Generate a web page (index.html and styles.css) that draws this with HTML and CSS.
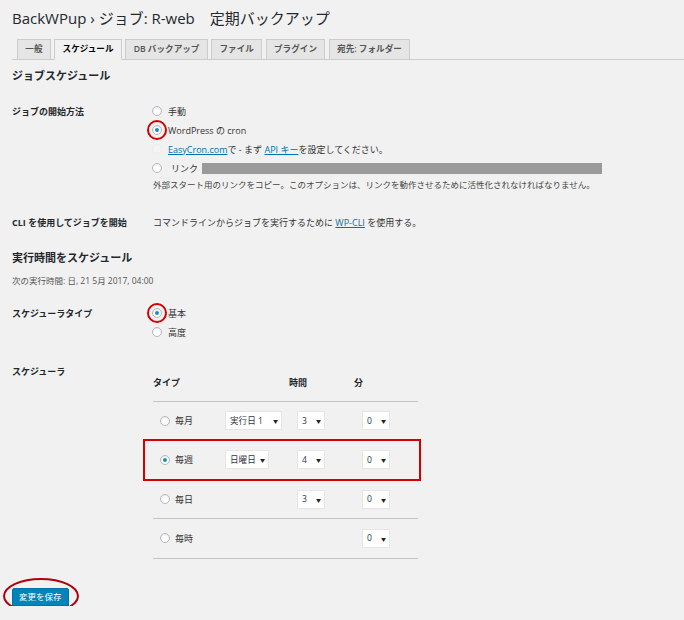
FILE: index.html
```html
<!DOCTYPE html>
<html lang="ja">
<head>
<meta charset="utf-8">
<title>BackWPup</title>
<link rel="stylesheet" href="styles.css">
</head>
<body>
<div class="wrap">
  <h1 class="page-title">BackWPup › ジョブ: R-web　定期バックアップ</h1>
  <nav class="tabs">
    <span class="tab">一般</span>
    <span class="tab active">スケジュール</span>
    <span class="tab">DB バックアップ</span>
    <span class="tab">ファイル</span>
    <span class="tab">プラグイン</span>
    <span class="tab">宛先: フォルダー</span>
  </nav>

  <h2 class="section-title s1">ジョブスケジュール</h2>

  <div class="form-row r-start">
    <div class="label">ジョブの開始方法</div>
    <div class="field">
      <div class="opt"><span class="radio"></span><span>手動</span></div>
      <div class="opt"><span class="radio checked circled"></span><span>WordPress の cron</span></div>
      <div class="opt"><span class="radio faint"></span><span><a class="link" href="#">EasyCron.com</a>で - まず <a class="link" href="#">API キー</a>を設定してください。</span></div>
      <div class="opt"><span class="radio"></span><span class="link-label">リンク</span><span class="redacted"></span></div>
      <p class="desc">外部スタート用のリンクをコピー。このオプションは、リンクを動作させるために活性化されなければなりません。</p>
    </div>
  </div>

  <div class="form-row r-cli">
    <div class="label">CLI を使用してジョブを開始</div>
    <div class="field line">コマンドラインからジョブを実行するために <a class="link" href="#">WP-CLI</a> を使用する。</div>
  </div>

  <h2 class="section-title s2">実行時間をスケジュール</h2>
  <p class="next-run">次の実行時間: 日, 21 5月 2017, 04:00</p>

  <div class="form-row r-type">
    <div class="label">スケジューラタイプ</div>
    <div class="field">
      <div class="opt"><span class="radio checked circled"></span><span>基本</span></div>
      <div class="opt"><span class="radio"></span><span>高度</span></div>
    </div>
  </div>

  <div class="form-row r-sched">
    <div class="label">スケジューラ</div>
    <div class="field">
      <div class="sched">
        <div class="sched-row head">
          <div class="c1">タイプ</div>
          <div class="c2"></div>
          <div class="c3">時間</div>
          <div class="c4">分</div>
        </div>
        <div class="sched-row">
          <div class="c1 type"><span class="radio"></span><span>毎月</span></div>
          <div class="c2"><span class="select w-day">実行日 1<i>▼</i></span></div>
          <div class="c3"><span class="select w-num">3<i>▼</i></span></div>
          <div class="c4"><span class="select w-num">0<i>▼</i></span></div>
        </div>
        <div class="sched-row">
          <div class="c1 type"><span class="radio checked"></span><span>毎週</span></div>
          <div class="c2"><span class="select w-wday">日曜日<i>▼</i></span></div>
          <div class="c3"><span class="select w-num">4<i>▼</i></span></div>
          <div class="c4"><span class="select w-num">0<i>▼</i></span></div>
        </div>
        <div class="sched-row">
          <div class="c1 type"><span class="radio"></span><span>毎日</span></div>
          <div class="c2"></div>
          <div class="c3"><span class="select w-num">3<i>▼</i></span></div>
          <div class="c4"><span class="select w-num">0<i>▼</i></span></div>
        </div>
        <div class="sched-row">
          <div class="c1 type"><span class="radio"></span><span>毎時</span></div>
          <div class="c2"></div>
          <div class="c3"></div>
          <div class="c4"><span class="select w-num">0<i>▼</i></span></div>
        </div>
        <div class="highlight-box"></div>
      </div>
    </div>
  </div>

  <div class="submit">
    <button class="button-primary" type="button">変更を保存</button>
  </div>
</div>
</body>
</html>
```

FILE: styles.css
```css
html, body {
  margin: 0;
  padding: 0;
  background: #f1f1f1;
}
body {
  font-family: "Open Sans", "Noto Sans CJK JP", sans-serif;
  color: #333;
  font-size: 9px;
}
.wrap {
  padding: 0 0 0 12px;
}
.page-title {
  margin: 8px 0 0;
  font-size: 15px;
  line-height: 20px;
  font-weight: 400;
  color: #23282d;
}
.tabs {
  display: flex;
  align-items: flex-end;
  margin-top: 11px;
  padding-left: 5px;
  border-bottom: 1px solid #ccc;
  height: 20px;
}
.tab {
  box-sizing: border-box;
  height: 20px;
  line-height: 19px;
  padding: 0 7.3px;
  margin-right: 3.5px;
  border: 1px solid #ccc;
  border-bottom: none;
  background: #e5e5e5;
  color: #555;
  font-size: 8.6px;
  font-weight: 600;
  white-space: nowrap;
}
.tab.active {
  height: 21px;
  margin-bottom: -1px;
  background: #f1f1f1;
  border-bottom: 1px solid #f1f1f1;
  color: #000;
  font-weight: 700;
}
.section-title {
  margin: 0;
  font-size: 11px;
  line-height: 16px;
  font-weight: 700;
  color: #23282d;
}
.section-title.s1 { margin-top: 8px; }
.section-title.s2 { margin-top: 18.5px; }

.form-row {
  display: grid;
  grid-template-columns: 140px 1fr;
  align-items: start;
}
.r-start { margin-top: 17.5px; }
.r-cli { margin-top: 22px; }
.r-type { margin-top: 15.5px; }
.r-sched { margin-top: 20px; }

.label {
  font-size: 9px;
  line-height: 19px;
  font-weight: 700;
  color: #23282d;
}
.field.line {
  line-height: 19px;
  padding-left: 1px;
}
.opt {
  display: flex;
  align-items: center;
  height: 19px;
  white-space: nowrap;
}
.radio {
  position: relative;
  box-sizing: border-box;
  display: inline-block;
  width: 10px;
  height: 10px;
  border: 1px solid #b4b9be;
  border-radius: 50%;
  background: #fff;
  box-shadow: inset 0 1px 2px rgba(0, 0, 0, 0.1);
  margin-right: 6px;
  flex: none;
}
.radio.faint {
  border-color: #ececec;
  background: #f4f4f4;
  box-shadow: none;
}
.radio.checked::before {
  content: "";
  position: absolute;
  left: 2px;
  top: 2px;
  width: 4px;
  height: 4px;
  border-radius: 50%;
  background: #1e8cbe;
}
.radio.circled::after {
  content: "";
  position: absolute;
  box-sizing: border-box;
  left: -6px;
  top: -6px;
  width: 20px;
  height: 20px;
  border: 2px solid #d40000;
  border-radius: 50%;
}
.link {
  color: #0073aa;
  text-decoration: underline;
}
.link-label {
  padding-left: 3px;
}
.redacted {
  display: inline-block;
  width: 400px;
  height: 11px;
  margin-left: 4px;
  background: #9a9a9a;
}
.desc {
  margin: 0;
  font-size: 8.5px;
  line-height: 13px;
  color: #444;
  padding-left: 1px;
  white-space: nowrap;
}
.next-run {
  margin: 8px 0 0;
  font-size: 8.5px;
  line-height: 14px;
  color: #555;
}

.sched {
  position: relative;
  width: 265px;
  margin-left: 1px;
  padding-top: 2px;
}
.sched-row {
  display: grid;
  grid-template-columns: 72px 64px 65px 64px;
  align-items: center;
  height: 38.25px;
  border-bottom: 1px solid #c4c4c4;
}
.sched-row.head {
  height: 37px;
  font-weight: 700;
  color: #23282d;
}
.type {
  display: flex;
  align-items: center;
  padding-left: 7px;
}
.type .radio {
  margin-right: 5px;
}
.select {
  box-sizing: border-box;
  display: inline-flex;
  align-items: center;
  justify-content: space-between;
  height: 19px;
  padding: 0 3px 0 4px;
  background: #fff;
  border: 1px solid #e6e6e6;
  color: #32373c;
  font-size: 8.6px;
  white-space: nowrap;
}
.select i {
  font-style: normal;
  font-size: 5px;
  color: #222;
}
.c3 .select, .c4 .select {
  margin-left: 8px;
}
.w-day { width: 57px; }
.w-wday { width: 44px; }
.w-num { width: 28px; }

.highlight-box {
  position: absolute;
  box-sizing: border-box;
  left: -10px;
  top: 77.5px;
  width: 278px;
  height: 42px;
  border: 2px solid #d40000;
}

.submit {
  margin-top: 29.5px;
}
.button-primary {
  position: relative;
  box-sizing: border-box;
  height: 18px;
  padding: 0 6px;
  font-family: "Open Sans", "Noto Sans CJK JP", sans-serif;
  font-size: 8.5px;
  line-height: 16px;
  color: #fff;
  background: #0085ba;
  border: 1px solid #0073aa;
  border-radius: 2px;
  box-shadow: 0 1px 0 #006799;
  cursor: pointer;
}
.button-primary::after {
  content: "";
  position: absolute;
  box-sizing: border-box;
  left: -10px;
  top: -11px;
  width: 76px;
  height: 36px;
  border: 2px solid #b0000a;
  border-radius: 50%;
}
```
